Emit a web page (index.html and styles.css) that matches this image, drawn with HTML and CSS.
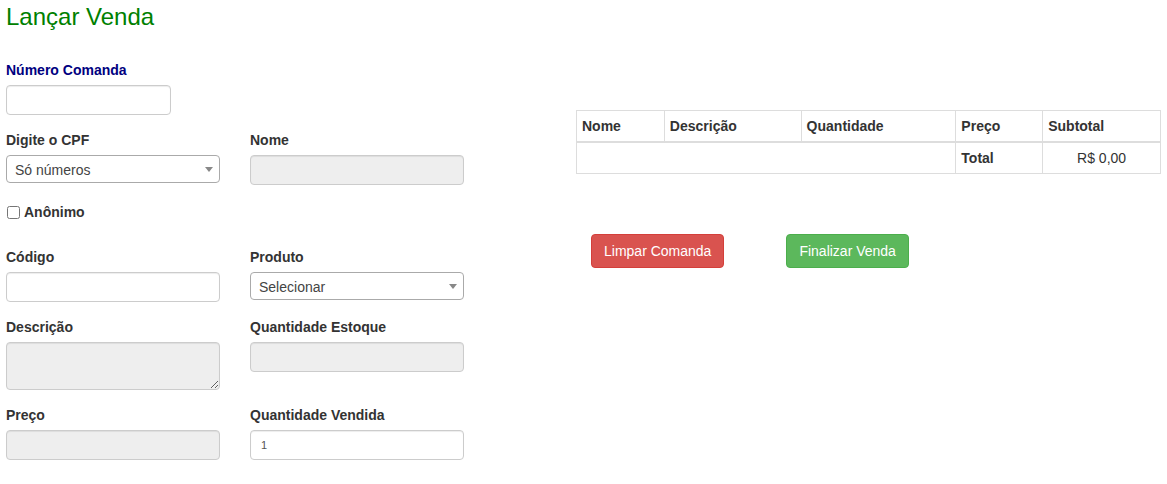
FILE: index.html
```html
<!DOCTYPE html>
<html lang="pt-BR">
<head>
<meta charset="utf-8">
<title>Lançar Venda</title>
<link rel="stylesheet" href="styles.css">
</head>
<body>
<div class="page">
  <h3 class="title">Lançar Venda</h3>
  <div class="layout">
    <form class="form">
      <div class="field">
        <label class="label label-navy">Número Comanda</label>
        <input class="control narrow" type="text">
      </div>
      <div class="row">
        <div class="field">
          <label class="label">Digite o CPF</label>
          <div class="select-wrap">
            <select class="control select"><option>Só números</option></select>
          </div>
        </div>
        <div class="field">
          <label class="label">Nome</label>
          <input class="control disabled" type="text" disabled>
        </div>
      </div>
      <label class="check"><input class="checkbox" type="checkbox">Anônimo</label>
      <div class="row">
        <div class="field">
          <label class="label">Código</label>
          <input class="control" type="text">
        </div>
        <div class="field">
          <label class="label">Produto</label>
          <div class="select-wrap">
            <select class="control select"><option>Selecionar</option></select>
          </div>
        </div>
      </div>
      <div class="row">
        <div class="field">
          <label class="label">Descrição</label>
          <textarea class="control disabled textarea" disabled></textarea>
        </div>
        <div class="field">
          <label class="label">Quantidade Estoque</label>
          <input class="control disabled" type="text" disabled>
        </div>
      </div>
      <div class="row">
        <div class="field">
          <label class="label">Preço</label>
          <input class="control disabled" type="text" disabled>
        </div>
        <div class="field">
          <label class="label">Quantidade Vendida</label>
          <input class="control small-value" type="text" value="1">
        </div>
      </div>
    </form>
    <div class="side">
      <table class="items">
        <thead>
          <tr>
            <th class="c-nome">Nome</th>
            <th class="c-desc">Descrição</th>
            <th class="c-qtd">Quantidade</th>
            <th class="c-preco">Preço</th>
            <th class="c-sub">Subtotal</th>
          </tr>
        </thead>
        <tbody>
          <tr>
            <td colspan="3"></td>
            <td class="strong">Total</td>
            <td class="center">R$ 0,00</td>
          </tr>
        </tbody>
      </table>
      <div class="actions">
        <button class="btn btn-danger" type="button">Limpar Comanda</button>
        <button class="btn btn-success" type="button">Finalizar Venda</button>
      </div>
    </div>
  </div>
</div>
</body>
</html>
```
FILE: styles.css
```css
html, body {
  margin: 0;
  background: #fff;
}
body {
  font-family: "Liberation Sans", Arial, Helvetica, sans-serif;
  font-size: 14px;
  line-height: 20px;
  color: #333;
}
.page {
  padding: 4px 6px 0;
}
.title {
  margin: 0;
  font-size: 24px;
  line-height: 26px;
  font-weight: normal;
  color: #008000;
}
.layout {
  display: flex;
  margin-top: 30px;
}
.form {
  width: 458px;
  flex: none;
}
.field {
  margin-bottom: 15px;
}
.label {
  display: block;
  font-weight: bold;
  margin-bottom: 5px;
  line-height: 20px;
}
.label-navy {
  color: #000080;
}
.row {
  display: grid;
  grid-template-columns: 214px 214px;
  column-gap: 30px;
}
.control {
  display: block;
  box-sizing: border-box;
  width: 100%;
  height: 30px;
  margin: 0;
  padding: 5px 8px;
  border: 1px solid #ccc;
  border-radius: 4px;
  box-shadow: inset 0 1px 1px rgba(0, 0, 0, .075);
  background: #fff;
  font-family: inherit;
  font-size: 14px;
  color: #555;
}
.narrow {
  width: 165px;
}
.disabled {
  background: #eee;
}
.textarea {
  height: 48px;
  resize: vertical;
}
.select-wrap {
  position: relative;
}
.select-wrap::after {
  content: "";
  position: absolute;
  right: 7px;
  top: 12px;
  border-left: 4px solid transparent;
  border-right: 4px solid transparent;
  border-top: 5px solid #888;
  pointer-events: none;
}
.select {
  -webkit-appearance: none;
  appearance: none;
  height: 28px;
  padding: 1px 20px 0 8px;
  border-color: #aaa;
  box-shadow: none;
  color: #444;
  line-height: 26px;
}
.small-value {
  font-size: 11px;
  padding-left: 10px;
}
.check {
  display: flex;
  align-items: center;
  height: 20px;
  margin-top: 2px;
  margin-bottom: 25px;
  font-weight: bold;
}
.checkbox {
  width: 13px;
  height: 13px;
  margin: 0 4px 0 1px;
}
.side {
  margin-left: 112px;
  padding-top: 50px;
}
.items {
  border-collapse: collapse;
  width: 585px;
}
.items th,
.items td {
  border: 1px solid #ddd;
  padding: 5px;
  line-height: 20px;
  text-align: left;
  vertical-align: top;
}
.items th {
  font-weight: bold;
}
.items thead th {
  border-bottom-width: 2px;
}
.c-nome { width: 77px; }
.c-desc { width: 126px; }
.c-qtd { width: 144px; }
.c-preco { width: 76px; }
.c-sub { width: 107px; }
.items .strong {
  font-weight: bold;
}
.items .center {
  text-align: center;
}
.actions {
  display: flex;
  gap: 62px;
  margin: 60px 0 0 15px;
}
.btn {
  padding: 6px 12px;
  font-family: inherit;
  font-size: 14px;
  line-height: 20px;
  border: 1px solid transparent;
  border-radius: 4px;
  color: #fff;
  cursor: pointer;
}
.btn-danger {
  background: #d9534f;
  border-color: #d43f3a;
}
.btn-success {
  background: #5cb85c;
  border-color: #4cae4c;
}
```
